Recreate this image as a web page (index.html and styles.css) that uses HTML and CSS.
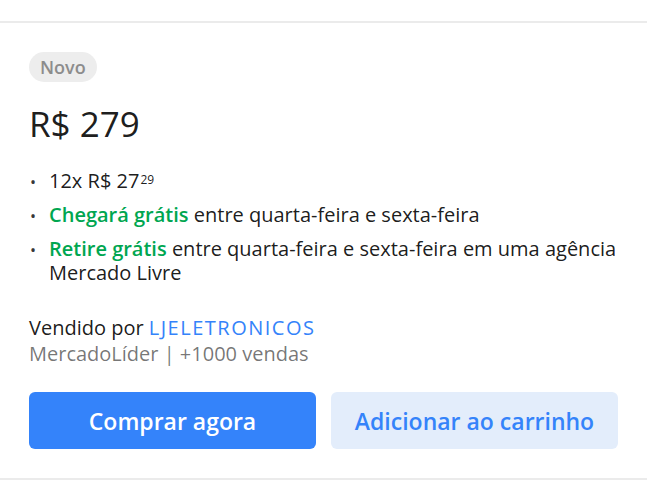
FILE: index.html
```html
<!DOCTYPE html>
<html>
  <head>
    <title>Comprar</title>
    <link rel="stylesheet" href="styles.css">
  </head>
  <body>
    <div class="buy-box">
      <div class="condition">Novo</div>

      <div class="price">R$ 279</div>

      <ul class="details">
        <li>12x R$ 27<sup>29</sup></li>
        <li><span class="free">Chegará grátis</span> entre quarta-feira e sexta-feira</li>
        <li><span class="free">Retire grátis</span> entre quarta-feira e sexta-feira em uma agência Mercado Livre</li>
      </ul>

      <div class="seller">
        Vendido por <a href="#">LJELETRONICOS</a>
      </div>
      <div class="seller-info">MercadoLíder | +1000 vendas</div>

      <div class="actions">
        <button class="btn-primary">Comprar agora</button>
        <button class="btn-secondary">Adicionar ao carrinho</button>
      </div>
    </div>
  </body>
</html>
```

FILE: styles.css
```css
body {
  margin: 0;
  padding-top: 21px;
  font-family: "Open Sans", sans-serif;
  color: rgba(0, 0, 0, 0.9);
  background: #fff;
}
.buy-box {
  border-top: 2px solid #ebebeb;
  border-bottom: 2px solid #ebebeb;
  padding: 29px 29px 29px;
}
.condition {
  width: fit-content;
  height: 30px;
  line-height: 30px;
  padding: 0 11px;
  border-radius: 15px;
  background-color: #ededed;
  color: #8c8c8c;
  font-size: 18px;
  font-weight: 600;
}
.price {
  margin-top: 22px;
  font-size: 35px;
  line-height: 40px;
  color: rgba(0, 0, 0, 0.9);
}
.details {
  margin: 25px 0 0;
  padding-left: 20px;
  list-style: none;
  font-size: 20px;
  line-height: 24px;
}
.details li {
  margin-bottom: 10px;
}
.details li:last-child {
  margin-bottom: 0;
}
.details li::before {
  content: "•";
  display: inline-block;
  width: 19px;
  margin-left: -19px;
  font-size: 16px;
  line-height: 1;
  color: rgba(0, 0, 0, 0.8);
}
.details sup {
  font-size: 12px;
  line-height: 0;
  vertical-align: 4px;
  margin-left: 1px;
}
.free {
  color: #00a650;
  font-weight: 600;
}
.seller {
  margin-top: 30px;
  font-size: 20px;
  line-height: 26px;
}
.seller a {
  color: #3483fa;
  text-decoration: none;
  letter-spacing: 1.5px;
}
.seller-info {
  font-size: 20px;
  line-height: 26px;
  color: rgba(0, 0, 0, 0.55);
}
.actions {
  display: flex;
  gap: 15px;
  margin-top: 25px;
}
.actions button {
  flex: 1;
  height: 57px;
  border: none;
  border-radius: 6px;
  font-family: inherit;
  font-size: 23px;
  font-weight: 600;
  cursor: pointer;
}
.btn-primary {
  background-color: #3483fa;
  color: #fff;
}
.btn-secondary {
  background-color: #e3edfb;
  color: #3483fa;
}
```
